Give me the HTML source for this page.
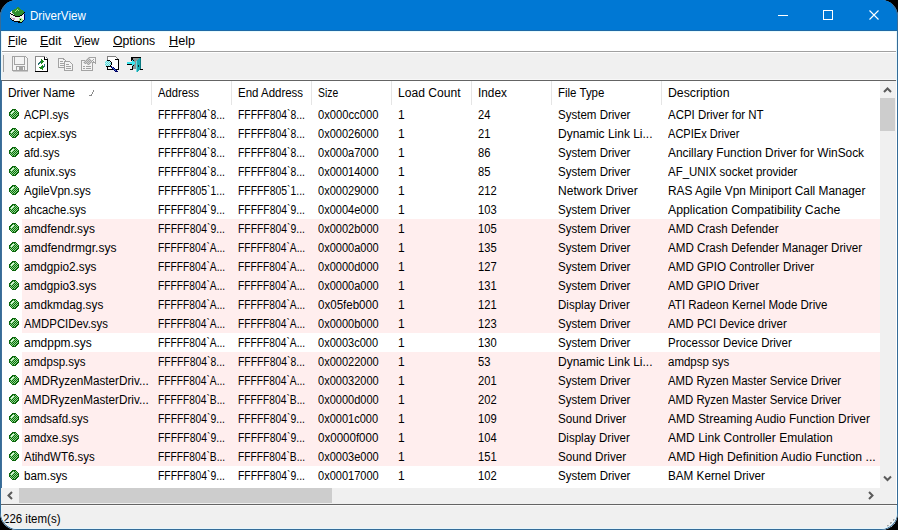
<!DOCTYPE html>
<html><head><meta charset="utf-8">
<style>
*{margin:0;padding:0;box-sizing:border-box}
html,body{width:898px;height:530px;overflow:hidden;background:#000}
body{position:relative;font-family:"Liberation Sans",sans-serif;font-size:12px;color:#000}
#win{position:absolute;left:0;top:0;width:898px;height:530px;background:#f0f0f0;border-radius:17px;overflow:hidden}
#frame{position:absolute;left:0;top:0;width:898px;height:530px;border:1px solid #356c98;border-top-color:#0078d4;border-radius:17px}
.abs{position:absolute}
#title{position:absolute;left:0;top:0;width:898px;height:31px;background:#0078d4}
#ttext{position:absolute;left:30px;top:1px;line-height:30px;color:#fff;font-size:12px}
#menu{position:absolute;left:1px;top:31px;width:896px;height:20px;background:#fff}
.mi{position:absolute;top:0;line-height:21px}
.mi u{text-decoration:underline}
#mline{position:absolute;left:1px;top:51px;width:896px;height:1px;background:#a0a0a0}
#mline2{position:absolute;left:1px;top:52px;width:896px;height:1px;background:#fff}
#tb{position:absolute;left:1px;top:53px;width:896px;height:26px;background:#f0f0f0}
#tbl{position:absolute;left:1px;top:79px;width:896px;height:1px;background:#f8f8f8}
#grip{position:absolute;left:3px;top:55px;width:1px;height:17px;background:#a0a0a0}
#lv{position:absolute;left:1px;top:80px;width:896px;height:425px;background:#fff;border-top:1px solid #646464;border-left:1px solid #41709a}
.ht{position:absolute;top:82px;line-height:23px;color:#000}
.hs{position:absolute;top:81px;width:1px;height:24px;background:#e5e5e5}
.pink{position:absolute;left:22px;width:858px;height:19px;background:#ffeeee}
.ico{position:absolute;left:9px;width:10px;height:10px}
.ico svg{display:block}
.c{position:absolute;line-height:19px;white-space:nowrap}
span{display:inline-block;transform-origin:0 0}
#vsb{position:absolute;left:880px;top:81px;width:16px;height:407px;background:#f0f0f0}
#vthumb{position:absolute;left:880px;top:98px;width:15px;height:33px;background:#cdcdcd}
#hsb{position:absolute;left:1px;top:488px;width:895px;height:16px;background:#f0f0f0}
#hthumb{position:absolute;left:19px;top:488px;width:313px;height:15px;background:#cdcdcd}
#sline{position:absolute;left:1px;top:504px;width:896px;height:1px;background:#646464}
#status{position:absolute;left:1px;top:505px;width:896px;height:25px;background:#f0f0f0;border-top:1px solid #fafafa}
#stext{position:absolute;left:3px;top:508px;line-height:23px}
</style></head><body>
<svg width="0" height="0" style="position:absolute">
<defs>
<g id="gball" shape-rendering="crispEdges"><rect x="3" y="0" width="4" height="1" fill="#0b650b"/><rect x="2" y="1" width="2" height="1" fill="#0b650b"/><rect x="4" y="1" width="1" height="1" fill="#8fe08f"/><rect x="5" y="1" width="1" height="1" fill="#0b650b"/><rect x="6" y="1" width="1" height="1" fill="#8fe08f"/><rect x="7" y="1" width="1" height="1" fill="#0b650b"/><rect x="1" y="2" width="2" height="1" fill="#0b650b"/><rect x="3" y="2" width="2" height="1" fill="#d6f6d6"/><rect x="5" y="2" width="1" height="1" fill="#8fe08f"/><rect x="6" y="2" width="1" height="1" fill="#0b650b"/><rect x="7" y="2" width="1" height="1" fill="#8fe08f"/><rect x="8" y="2" width="1" height="1" fill="#0b650b"/><rect x="0" y="3" width="2" height="1" fill="#0b650b"/><rect x="2" y="3" width="2" height="1" fill="#d6f6d6"/><rect x="4" y="3" width="1" height="1" fill="#8fe08f"/><rect x="5" y="3" width="1" height="1" fill="#0b650b"/><rect x="6" y="3" width="1" height="1" fill="#8fe08f"/><rect x="7" y="3" width="1" height="1" fill="#0b650b"/><rect x="8" y="3" width="1" height="1" fill="#8fe08f"/><rect x="9" y="3" width="1" height="1" fill="#0b650b"/><rect x="0" y="4" width="1" height="1" fill="#0b650b"/><rect x="1" y="4" width="1" height="1" fill="#8fe08f"/><rect x="2" y="4" width="1" height="1" fill="#d6f6d6"/><rect x="3" y="4" width="1" height="1" fill="#8fe08f"/><rect x="4" y="4" width="1" height="1" fill="#0b650b"/><rect x="5" y="4" width="1" height="1" fill="#8fe08f"/><rect x="6" y="4" width="1" height="1" fill="#0b650b"/><rect x="7" y="4" width="1" height="1" fill="#8fe08f"/><rect x="8" y="4" width="2" height="1" fill="#0b650b"/><rect x="0" y="5" width="2" height="1" fill="#0b650b"/><rect x="2" y="5" width="1" height="1" fill="#8fe08f"/><rect x="3" y="5" width="1" height="1" fill="#0b650b"/><rect x="4" y="5" width="1" height="1" fill="#8fe08f"/><rect x="5" y="5" width="1" height="1" fill="#0b650b"/><rect x="6" y="5" width="1" height="1" fill="#8fe08f"/><rect x="7" y="5" width="1" height="1" fill="#0b650b"/><rect x="8" y="5" width="1" height="1" fill="#8fe08f"/><rect x="9" y="5" width="1" height="1" fill="#0b650b"/><rect x="0" y="6" width="1" height="1" fill="#0b650b"/><rect x="1" y="6" width="1" height="1" fill="#8fe08f"/><rect x="2" y="6" width="1" height="1" fill="#0b650b"/><rect x="3" y="6" width="1" height="1" fill="#8fe08f"/><rect x="4" y="6" width="1" height="1" fill="#0b650b"/><rect x="5" y="6" width="1" height="1" fill="#8fe08f"/><rect x="6" y="6" width="1" height="1" fill="#0b650b"/><rect x="7" y="6" width="1" height="1" fill="#8fe08f"/><rect x="8" y="6" width="2" height="1" fill="#0b650b"/><rect x="1" y="7" width="1" height="1" fill="#0b650b"/><rect x="2" y="7" width="1" height="1" fill="#8fe08f"/><rect x="3" y="7" width="1" height="1" fill="#0b650b"/><rect x="4" y="7" width="1" height="1" fill="#8fe08f"/><rect x="5" y="7" width="1" height="1" fill="#0b650b"/><rect x="6" y="7" width="1" height="1" fill="#8fe08f"/><rect x="7" y="7" width="2" height="1" fill="#0b650b"/><rect x="2" y="8" width="1" height="1" fill="#0b650b"/><rect x="3" y="8" width="1" height="1" fill="#8fe08f"/><rect x="4" y="8" width="1" height="1" fill="#0b650b"/><rect x="5" y="8" width="1" height="1" fill="#8fe08f"/><rect x="6" y="8" width="2" height="1" fill="#0b650b"/><rect x="3" y="9" width="4" height="1" fill="#0b650b"/></g>
</defs>
</svg>
<div id="win">
<div id="title"></div>
<div id="menu"></div><div class="abs" style="left:0;top:30px;width:898px;height:1px;background:#1f69a6"></div><div class="abs" style="left:1px;top:31px;width:896px;height:1px;background:#e8fcff"></div>
<div id="mline"></div><div id="mline2"></div>
<div id="tb"></div><div id="tbl"></div>
<div id="lv"></div>
<div id="vsb"></div><div id="vthumb"></div>
<div id="hsb"></div><div id="hthumb"></div>
<div id="sline"></div>
<div id="status"></div>
</div>
<div id="ttext"><span style="transform:scaleX(0.9649)">DriverView</span></div>
<div class="mi" style="left:8px;top:31px"><span style="transform:scaleX(0.9889)"><u>F</u>ile</span></div>
<div class="mi" style="left:40px;top:31px"><span style="transform:scaleX(1.0368)"><u>E</u>dit</span></div>
<div class="mi" style="left:74px;top:31px"><span style="transform:scaleX(0.9808)"><u>V</u>iew</span></div>
<div class="mi" style="left:113px;top:31px"><span style="transform:scaleX(1.0195)"><u>O</u>ptions</span></div>
<div class="mi" style="left:169px;top:31px"><span style="transform:scaleX(1.0565)"><u>H</u>elp</span></div>
<div id="grip"></div>
<div class="abs" id="tcontent"></div>
<svg class="abs" style="left:9px;top:7px" width="16" height="16" viewBox="0 0 16 16" shape-rendering="crispEdges"><rect x="8" y="0" width="2" height="1" fill="#2f8f2f"/><rect x="7" y="1" width="4" height="1" fill="#2f8f2f"/><rect x="5" y="2" width="3" height="1" fill="#2f8f2f"/><rect x="8" y="2" width="1" height="1" fill="#a8f088"/><rect x="9" y="2" width="3" height="1" fill="#2f8f2f"/><rect x="3" y="3" width="4" height="1" fill="#2f8f2f"/><rect x="7" y="3" width="1" height="1" fill="#a8f088"/><rect x="8" y="3" width="1" height="1" fill="#2f8f2f"/><rect x="9" y="3" width="1" height="1" fill="#a8f088"/><rect x="10" y="3" width="4" height="1" fill="#2f8f2f"/><rect x="2" y="4" width="1" height="1" fill="#eef2f0"/><rect x="3" y="4" width="3" height="1" fill="#2f8f2f"/><rect x="6" y="4" width="1" height="1" fill="#a8f088"/><rect x="7" y="4" width="8" height="1" fill="#2f8f2f"/><rect x="1" y="5" width="2" height="1" fill="#eef2f0"/><rect x="3" y="5" width="12" height="1" fill="#2f8f2f"/><rect x="15" y="5" width="1" height="1" fill="#000000"/><rect x="1" y="6" width="1" height="1" fill="#000000"/><rect x="2" y="6" width="2" height="1" fill="#eef2f0"/><rect x="4" y="6" width="10" height="1" fill="#2f8f2f"/><rect x="14" y="6" width="1" height="1" fill="#000000"/><rect x="1" y="7" width="1" height="1" fill="#eef2f0"/><rect x="2" y="7" width="2" height="1" fill="#000000"/><rect x="4" y="7" width="1" height="1" fill="#eef2f0"/><rect x="5" y="7" width="8" height="1" fill="#2f8f2f"/><rect x="13" y="7" width="1" height="1" fill="#000000"/><rect x="14" y="7" width="1" height="1" fill="#eef2f0"/><rect x="15" y="7" width="1" height="1" fill="#000070"/><rect x="1" y="8" width="3" height="1" fill="#eef2f0"/><rect x="4" y="8" width="2" height="1" fill="#000000"/><rect x="6" y="8" width="5" height="1" fill="#2f8f2f"/><rect x="11" y="8" width="2" height="1" fill="#000000"/><rect x="13" y="8" width="2" height="1" fill="#eef2f0"/><rect x="15" y="8" width="1" height="1" fill="#000070"/><rect x="1" y="9" width="5" height="1" fill="#eef2f0"/><rect x="6" y="9" width="5" height="1" fill="#000000"/><rect x="11" y="9" width="4" height="1" fill="#eef2f0"/><rect x="15" y="9" width="1" height="1" fill="#000070"/><rect x="1" y="10" width="1" height="1" fill="#eef2f0"/><rect x="2" y="10" width="1" height="1" fill="#b8c0c0"/><rect x="3" y="10" width="12" height="1" fill="#eef2f0"/><rect x="15" y="10" width="1" height="1" fill="#000070"/><rect x="1" y="11" width="1" height="1" fill="#000000"/><rect x="2" y="11" width="1" height="1" fill="#eef2f0"/><rect x="3" y="11" width="3" height="1" fill="#d0a0c0"/><rect x="6" y="11" width="4" height="1" fill="#eef2f0"/><rect x="10" y="11" width="3" height="1" fill="#a8f088"/><rect x="13" y="11" width="2" height="1" fill="#eef2f0"/><rect x="15" y="11" width="1" height="1" fill="#000070"/><rect x="2" y="12" width="1" height="1" fill="#000000"/><rect x="3" y="12" width="1" height="1" fill="#eef2f0"/><rect x="4" y="12" width="2" height="1" fill="#d0a0c0"/><rect x="6" y="12" width="4" height="1" fill="#eef2f0"/><rect x="10" y="12" width="1" height="1" fill="#a8f088"/><rect x="11" y="12" width="1" height="1" fill="#000000"/><rect x="12" y="12" width="2" height="1" fill="#a8f088"/><rect x="14" y="12" width="1" height="1" fill="#eef2f0"/><rect x="15" y="12" width="1" height="1" fill="#000070"/><rect x="3" y="13" width="2" height="1" fill="#000000"/><rect x="5" y="13" width="5" height="1" fill="#eef2f0"/><rect x="10" y="13" width="4" height="1" fill="#a8f088"/><rect x="14" y="13" width="1" height="1" fill="#000070"/><rect x="5" y="14" width="6" height="1" fill="#000000"/><rect x="11" y="14" width="2" height="1" fill="#a8f088"/><rect x="13" y="14" width="1" height="1" fill="#000000"/><rect x="9" y="15" width="4" height="1" fill="#000000"/></svg>
<svg class="abs" style="left:12px;top:56px" width="16" height="16" viewBox="0 0 16 16" shape-rendering="crispEdges"><rect x="0" y="0" width="14" height="1" fill="#a3a3a3"/><rect x="0" y="1" width="1" height="1" fill="#a3a3a3"/><rect x="1" y="1" width="1" height="1" fill="#f4f4f4"/><rect x="2" y="1" width="1" height="1" fill="#a3a3a3"/><rect x="3" y="1" width="9" height="1" fill="#f4f4f4"/><rect x="12" y="1" width="1" height="1" fill="#a3a3a3"/><rect x="13" y="1" width="1" height="1" fill="#f4f4f4"/><rect x="14" y="1" width="1" height="1" fill="#a3a3a3"/><rect x="0" y="2" width="1" height="1" fill="#a3a3a3"/><rect x="1" y="2" width="1" height="1" fill="#f4f4f4"/><rect x="2" y="2" width="1" height="1" fill="#a3a3a3"/><rect x="3" y="2" width="9" height="1" fill="#f4f4f4"/><rect x="12" y="2" width="1" height="1" fill="#a3a3a3"/><rect x="13" y="2" width="2" height="1" fill="#f4f4f4"/><rect x="15" y="2" width="1" height="1" fill="#a3a3a3"/><rect x="0" y="3" width="1" height="1" fill="#a3a3a3"/><rect x="1" y="3" width="1" height="1" fill="#f4f4f4"/><rect x="2" y="3" width="1" height="1" fill="#a3a3a3"/><rect x="3" y="3" width="9" height="1" fill="#f4f4f4"/><rect x="12" y="3" width="1" height="1" fill="#a3a3a3"/><rect x="13" y="3" width="2" height="1" fill="#f4f4f4"/><rect x="15" y="3" width="1" height="1" fill="#a3a3a3"/><rect x="0" y="4" width="1" height="1" fill="#a3a3a3"/><rect x="1" y="4" width="1" height="1" fill="#f4f4f4"/><rect x="2" y="4" width="1" height="1" fill="#a3a3a3"/><rect x="3" y="4" width="9" height="1" fill="#f4f4f4"/><rect x="12" y="4" width="1" height="1" fill="#a3a3a3"/><rect x="13" y="4" width="2" height="1" fill="#f4f4f4"/><rect x="15" y="4" width="1" height="1" fill="#a3a3a3"/><rect x="0" y="5" width="1" height="1" fill="#a3a3a3"/><rect x="1" y="5" width="1" height="1" fill="#f4f4f4"/><rect x="2" y="5" width="1" height="1" fill="#a3a3a3"/><rect x="3" y="5" width="9" height="1" fill="#f4f4f4"/><rect x="12" y="5" width="1" height="1" fill="#a3a3a3"/><rect x="13" y="5" width="2" height="1" fill="#f4f4f4"/><rect x="15" y="5" width="1" height="1" fill="#a3a3a3"/><rect x="0" y="6" width="1" height="1" fill="#a3a3a3"/><rect x="1" y="6" width="1" height="1" fill="#f4f4f4"/><rect x="2" y="6" width="1" height="1" fill="#a3a3a3"/><rect x="3" y="6" width="9" height="1" fill="#f4f4f4"/><rect x="12" y="6" width="1" height="1" fill="#a3a3a3"/><rect x="13" y="6" width="2" height="1" fill="#f4f4f4"/><rect x="15" y="6" width="1" height="1" fill="#a3a3a3"/><rect x="0" y="7" width="1" height="1" fill="#a3a3a3"/><rect x="1" y="7" width="1" height="1" fill="#f4f4f4"/><rect x="2" y="7" width="1" height="1" fill="#a3a3a3"/><rect x="3" y="7" width="9" height="1" fill="#f4f4f4"/><rect x="12" y="7" width="1" height="1" fill="#a3a3a3"/><rect x="13" y="7" width="2" height="1" fill="#f4f4f4"/><rect x="15" y="7" width="1" height="1" fill="#a3a3a3"/><rect x="0" y="8" width="1" height="1" fill="#a3a3a3"/><rect x="1" y="8" width="1" height="1" fill="#f4f4f4"/><rect x="2" y="8" width="11" height="1" fill="#a3a3a3"/><rect x="13" y="8" width="2" height="1" fill="#f4f4f4"/><rect x="15" y="8" width="1" height="1" fill="#a3a3a3"/><rect x="0" y="9" width="1" height="1" fill="#a3a3a3"/><rect x="1" y="9" width="14" height="1" fill="#f4f4f4"/><rect x="15" y="9" width="1" height="1" fill="#a3a3a3"/><rect x="0" y="10" width="1" height="1" fill="#a3a3a3"/><rect x="1" y="10" width="3" height="1" fill="#f4f4f4"/><rect x="4" y="10" width="9" height="1" fill="#a3a3a3"/><rect x="13" y="10" width="2" height="1" fill="#f4f4f4"/><rect x="15" y="10" width="1" height="1" fill="#a3a3a3"/><rect x="0" y="11" width="1" height="1" fill="#a3a3a3"/><rect x="1" y="11" width="3" height="1" fill="#f4f4f4"/><rect x="4" y="11" width="1" height="1" fill="#a3a3a3"/><rect x="5" y="11" width="2" height="1" fill="#f4f4f4"/><rect x="7" y="11" width="4" height="1" fill="#a3a3a3"/><rect x="11" y="11" width="1" height="1" fill="#f4f4f4"/><rect x="12" y="11" width="1" height="1" fill="#a3a3a3"/><rect x="13" y="11" width="2" height="1" fill="#f4f4f4"/><rect x="15" y="11" width="1" height="1" fill="#a3a3a3"/><rect x="0" y="12" width="1" height="1" fill="#a3a3a3"/><rect x="1" y="12" width="3" height="1" fill="#f4f4f4"/><rect x="4" y="12" width="1" height="1" fill="#a3a3a3"/><rect x="5" y="12" width="2" height="1" fill="#f4f4f4"/><rect x="7" y="12" width="4" height="1" fill="#a3a3a3"/><rect x="11" y="12" width="1" height="1" fill="#f4f4f4"/><rect x="12" y="12" width="1" height="1" fill="#a3a3a3"/><rect x="13" y="12" width="2" height="1" fill="#f4f4f4"/><rect x="15" y="12" width="1" height="1" fill="#a3a3a3"/><rect x="0" y="13" width="1" height="1" fill="#a3a3a3"/><rect x="1" y="13" width="3" height="1" fill="#f4f4f4"/><rect x="4" y="13" width="1" height="1" fill="#a3a3a3"/><rect x="5" y="13" width="2" height="1" fill="#f4f4f4"/><rect x="7" y="13" width="4" height="1" fill="#a3a3a3"/><rect x="11" y="13" width="1" height="1" fill="#f4f4f4"/><rect x="12" y="13" width="1" height="1" fill="#a3a3a3"/><rect x="13" y="13" width="2" height="1" fill="#f4f4f4"/><rect x="15" y="13" width="1" height="1" fill="#a3a3a3"/><rect x="0" y="14" width="16" height="1" fill="#a3a3a3"/><rect x="1" y="15" width="15" height="1" fill="#c8c8c8"/></svg>
<svg class="abs" style="left:35px;top:56px" width="13" height="16" viewBox="0 0 13 16" shape-rendering="crispEdges"><rect x="0" y="0" width="10" height="1" fill="#8a8a8a"/><rect x="0" y="1" width="1" height="1" fill="#8a8a8a"/><rect x="1" y="1" width="8" height="1" fill="#ffffff"/><rect x="9" y="1" width="1" height="1" fill="#000000"/><rect x="10" y="1" width="1" height="1" fill="#ffffff"/><rect x="11" y="1" width="1" height="1" fill="#8a8a8a"/><rect x="0" y="2" width="1" height="1" fill="#8a8a8a"/><rect x="1" y="2" width="8" height="1" fill="#ffffff"/><rect x="9" y="2" width="1" height="1" fill="#000000"/><rect x="10" y="2" width="2" height="1" fill="#ffffff"/><rect x="12" y="2" width="1" height="1" fill="#8a8a8a"/><rect x="0" y="3" width="1" height="1" fill="#8a8a8a"/><rect x="1" y="3" width="5" height="1" fill="#ffffff"/><rect x="6" y="3" width="1" height="1" fill="#1a8a1a"/><rect x="7" y="3" width="2" height="1" fill="#ffffff"/><rect x="9" y="3" width="4" height="1" fill="#000000"/><rect x="0" y="4" width="1" height="1" fill="#8a8a8a"/><rect x="1" y="4" width="5" height="1" fill="#ffffff"/><rect x="6" y="4" width="2" height="1" fill="#1a8a1a"/><rect x="8" y="4" width="4" height="1" fill="#ffffff"/><rect x="12" y="4" width="1" height="1" fill="#000000"/><rect x="0" y="5" width="1" height="1" fill="#8a8a8a"/><rect x="1" y="5" width="4" height="1" fill="#ffffff"/><rect x="5" y="5" width="1" height="1" fill="#2a6f6f"/><rect x="6" y="5" width="3" height="1" fill="#1a8a1a"/><rect x="9" y="5" width="3" height="1" fill="#ffffff"/><rect x="12" y="5" width="1" height="1" fill="#000000"/><rect x="0" y="6" width="1" height="1" fill="#8a8a8a"/><rect x="1" y="6" width="3" height="1" fill="#ffffff"/><rect x="4" y="6" width="2" height="1" fill="#2a6f6f"/><rect x="6" y="6" width="2" height="1" fill="#1a8a1a"/><rect x="8" y="6" width="4" height="1" fill="#ffffff"/><rect x="12" y="6" width="1" height="1" fill="#000000"/><rect x="0" y="7" width="1" height="1" fill="#8a8a8a"/><rect x="1" y="7" width="2" height="1" fill="#ffffff"/><rect x="3" y="7" width="2" height="1" fill="#2a6f6f"/><rect x="5" y="7" width="1" height="1" fill="#ffffff"/><rect x="6" y="7" width="1" height="1" fill="#1a8a1a"/><rect x="7" y="7" width="5" height="1" fill="#ffffff"/><rect x="12" y="7" width="1" height="1" fill="#000000"/><rect x="0" y="8" width="1" height="1" fill="#8a8a8a"/><rect x="1" y="8" width="2" height="1" fill="#ffffff"/><rect x="3" y="8" width="1" height="1" fill="#2a6f6f"/><rect x="4" y="8" width="5" height="1" fill="#ffffff"/><rect x="9" y="8" width="1" height="1" fill="#2a6f6f"/><rect x="10" y="8" width="2" height="1" fill="#ffffff"/><rect x="12" y="8" width="1" height="1" fill="#000000"/><rect x="0" y="9" width="1" height="1" fill="#8a8a8a"/><rect x="1" y="9" width="6" height="1" fill="#ffffff"/><rect x="7" y="9" width="1" height="1" fill="#1a8a1a"/><rect x="8" y="9" width="1" height="1" fill="#ffffff"/><rect x="9" y="9" width="1" height="1" fill="#2a6f6f"/><rect x="10" y="9" width="2" height="1" fill="#ffffff"/><rect x="12" y="9" width="1" height="1" fill="#000000"/><rect x="0" y="10" width="1" height="1" fill="#8a8a8a"/><rect x="1" y="10" width="5" height="1" fill="#ffffff"/><rect x="6" y="10" width="2" height="1" fill="#1a8a1a"/><rect x="8" y="10" width="2" height="1" fill="#2a6f6f"/><rect x="10" y="10" width="2" height="1" fill="#ffffff"/><rect x="12" y="10" width="1" height="1" fill="#000000"/><rect x="0" y="11" width="1" height="1" fill="#8a8a8a"/><rect x="1" y="11" width="3" height="1" fill="#ffffff"/><rect x="4" y="11" width="4" height="1" fill="#1a8a1a"/><rect x="8" y="11" width="1" height="1" fill="#2a6f6f"/><rect x="9" y="11" width="3" height="1" fill="#ffffff"/><rect x="12" y="11" width="1" height="1" fill="#000000"/><rect x="0" y="12" width="1" height="1" fill="#8a8a8a"/><rect x="1" y="12" width="4" height="1" fill="#ffffff"/><rect x="5" y="12" width="3" height="1" fill="#1a8a1a"/><rect x="8" y="12" width="4" height="1" fill="#ffffff"/><rect x="12" y="12" width="1" height="1" fill="#000000"/><rect x="0" y="13" width="1" height="1" fill="#8a8a8a"/><rect x="1" y="13" width="6" height="1" fill="#ffffff"/><rect x="7" y="13" width="1" height="1" fill="#1a8a1a"/><rect x="8" y="13" width="4" height="1" fill="#ffffff"/><rect x="12" y="13" width="1" height="1" fill="#000000"/><rect x="0" y="14" width="1" height="1" fill="#8a8a8a"/><rect x="1" y="14" width="11" height="1" fill="#ffffff"/><rect x="12" y="14" width="1" height="1" fill="#000000"/><rect x="0" y="15" width="13" height="1" fill="#000000"/></svg>
<svg class="abs" style="left:58px;top:58px" width="15" height="13" viewBox="0 0 15 13" shape-rendering="crispEdges"><rect x="0" y="0" width="6" height="1" fill="#a3a3a3"/><rect x="0" y="1" width="1" height="1" fill="#a3a3a3"/><rect x="1" y="1" width="4" height="1" fill="#f4f4f4"/><rect x="5" y="1" width="2" height="1" fill="#a3a3a3"/><rect x="0" y="2" width="1" height="1" fill="#a3a3a3"/><rect x="1" y="2" width="6" height="1" fill="#f4f4f4"/><rect x="7" y="2" width="1" height="1" fill="#a3a3a3"/><rect x="0" y="3" width="1" height="1" fill="#a3a3a3"/><rect x="1" y="3" width="1" height="1" fill="#f4f4f4"/><rect x="2" y="3" width="3" height="1" fill="#a3a3a3"/><rect x="5" y="3" width="1" height="1" fill="#f4f4f4"/><rect x="6" y="3" width="6" height="1" fill="#a3a3a3"/><rect x="0" y="4" width="1" height="1" fill="#a3a3a3"/><rect x="1" y="4" width="5" height="1" fill="#f4f4f4"/><rect x="6" y="4" width="1" height="1" fill="#a3a3a3"/><rect x="7" y="4" width="5" height="1" fill="#f4f4f4"/><rect x="12" y="4" width="1" height="1" fill="#a3a3a3"/><rect x="0" y="5" width="1" height="1" fill="#a3a3a3"/><rect x="1" y="5" width="1" height="1" fill="#f4f4f4"/><rect x="2" y="5" width="5" height="1" fill="#a3a3a3"/><rect x="7" y="5" width="6" height="1" fill="#f4f4f4"/><rect x="13" y="5" width="1" height="1" fill="#a3a3a3"/><rect x="0" y="6" width="1" height="1" fill="#a3a3a3"/><rect x="1" y="6" width="5" height="1" fill="#f4f4f4"/><rect x="6" y="6" width="1" height="1" fill="#a3a3a3"/><rect x="7" y="6" width="1" height="1" fill="#f4f4f4"/><rect x="8" y="6" width="3" height="1" fill="#a3a3a3"/><rect x="11" y="6" width="3" height="1" fill="#f4f4f4"/><rect x="14" y="6" width="1" height="1" fill="#a3a3a3"/><rect x="0" y="7" width="1" height="1" fill="#a3a3a3"/><rect x="1" y="7" width="1" height="1" fill="#f4f4f4"/><rect x="2" y="7" width="5" height="1" fill="#a3a3a3"/><rect x="7" y="7" width="7" height="1" fill="#f4f4f4"/><rect x="14" y="7" width="1" height="1" fill="#a3a3a3"/><rect x="0" y="8" width="1" height="1" fill="#a3a3a3"/><rect x="1" y="8" width="5" height="1" fill="#f4f4f4"/><rect x="6" y="8" width="1" height="1" fill="#a3a3a3"/><rect x="7" y="8" width="1" height="1" fill="#f4f4f4"/><rect x="8" y="8" width="5" height="1" fill="#a3a3a3"/><rect x="13" y="8" width="1" height="1" fill="#f4f4f4"/><rect x="14" y="8" width="1" height="1" fill="#a3a3a3"/><rect x="0" y="9" width="7" height="1" fill="#a3a3a3"/><rect x="7" y="9" width="7" height="1" fill="#f4f4f4"/><rect x="14" y="9" width="1" height="1" fill="#a3a3a3"/><rect x="6" y="10" width="1" height="1" fill="#a3a3a3"/><rect x="7" y="10" width="1" height="1" fill="#f4f4f4"/><rect x="8" y="10" width="5" height="1" fill="#a3a3a3"/><rect x="13" y="10" width="1" height="1" fill="#f4f4f4"/><rect x="14" y="10" width="1" height="1" fill="#a3a3a3"/><rect x="6" y="11" width="1" height="1" fill="#a3a3a3"/><rect x="7" y="11" width="7" height="1" fill="#f4f4f4"/><rect x="14" y="11" width="1" height="1" fill="#a3a3a3"/><rect x="6" y="12" width="9" height="1" fill="#a3a3a3"/></svg>
<svg class="abs" style="left:81px;top:57px" width="16" height="14" viewBox="0 0 16 14" shape-rendering="crispEdges"><rect x="7" y="0" width="1" height="1" fill="#cfcfcf"/><rect x="8" y="0" width="7" height="1" fill="#a3a3a3"/><rect x="6" y="1" width="1" height="1" fill="#cfcfcf"/><rect x="7" y="1" width="1" height="1" fill="#a3a3a3"/><rect x="8" y="1" width="1" height="1" fill="#cfcfcf"/><rect x="9" y="1" width="5" height="1" fill="#f4f4f4"/><rect x="14" y="1" width="1" height="1" fill="#a3a3a3"/><rect x="5" y="2" width="1" height="1" fill="#cfcfcf"/><rect x="6" y="2" width="1" height="1" fill="#a3a3a3"/><rect x="7" y="2" width="1" height="1" fill="#cfcfcf"/><rect x="8" y="2" width="1" height="1" fill="#a3a3a3"/><rect x="9" y="2" width="1" height="1" fill="#cfcfcf"/><rect x="10" y="2" width="2" height="1" fill="#f4f4f4"/><rect x="12" y="2" width="1" height="1" fill="#a3a3a3"/><rect x="13" y="2" width="1" height="1" fill="#f4f4f4"/><rect x="14" y="2" width="1" height="1" fill="#a3a3a3"/><rect x="0" y="3" width="4" height="1" fill="#a3a3a3"/><rect x="4" y="3" width="1" height="1" fill="#cfcfcf"/><rect x="5" y="3" width="1" height="1" fill="#a3a3a3"/><rect x="6" y="3" width="1" height="1" fill="#cfcfcf"/><rect x="7" y="3" width="1" height="1" fill="#a3a3a3"/><rect x="8" y="3" width="1" height="1" fill="#cfcfcf"/><rect x="9" y="3" width="1" height="1" fill="#a3a3a3"/><rect x="10" y="3" width="1" height="1" fill="#cfcfcf"/><rect x="11" y="3" width="1" height="1" fill="#a3a3a3"/><rect x="12" y="3" width="2" height="1" fill="#f4f4f4"/><rect x="14" y="3" width="1" height="1" fill="#a3a3a3"/><rect x="0" y="4" width="1" height="1" fill="#a3a3a3"/><rect x="1" y="4" width="2" height="1" fill="#f4f4f4"/><rect x="3" y="4" width="1" height="1" fill="#cfcfcf"/><rect x="4" y="4" width="1" height="1" fill="#a3a3a3"/><rect x="5" y="4" width="1" height="1" fill="#cfcfcf"/><rect x="6" y="4" width="1" height="1" fill="#a3a3a3"/><rect x="7" y="4" width="1" height="1" fill="#cfcfcf"/><rect x="8" y="4" width="1" height="1" fill="#a3a3a3"/><rect x="9" y="4" width="1" height="1" fill="#cfcfcf"/><rect x="10" y="4" width="1" height="1" fill="#a3a3a3"/><rect x="11" y="4" width="1" height="1" fill="#f4f4f4"/><rect x="12" y="4" width="1" height="1" fill="#a3a3a3"/><rect x="13" y="4" width="1" height="1" fill="#f4f4f4"/><rect x="14" y="4" width="1" height="1" fill="#a3a3a3"/><rect x="0" y="5" width="1" height="1" fill="#a3a3a3"/><rect x="1" y="5" width="1" height="1" fill="#f4f4f4"/><rect x="2" y="5" width="1" height="1" fill="#cfcfcf"/><rect x="3" y="5" width="1" height="1" fill="#a3a3a3"/><rect x="4" y="5" width="1" height="1" fill="#cfcfcf"/><rect x="5" y="5" width="1" height="1" fill="#a3a3a3"/><rect x="6" y="5" width="1" height="1" fill="#cfcfcf"/><rect x="7" y="5" width="1" height="1" fill="#a3a3a3"/><rect x="8" y="5" width="1" height="1" fill="#cfcfcf"/><rect x="9" y="5" width="1" height="1" fill="#a3a3a3"/><rect x="10" y="5" width="1" height="1" fill="#cfcfcf"/><rect x="11" y="5" width="4" height="1" fill="#a3a3a3"/><rect x="0" y="6" width="1" height="1" fill="#a3a3a3"/><rect x="1" y="6" width="2" height="1" fill="#f4f4f4"/><rect x="3" y="6" width="1" height="1" fill="#cfcfcf"/><rect x="4" y="6" width="1" height="1" fill="#a3a3a3"/><rect x="5" y="6" width="1" height="1" fill="#cfcfcf"/><rect x="6" y="6" width="1" height="1" fill="#a3a3a3"/><rect x="7" y="6" width="1" height="1" fill="#cfcfcf"/><rect x="8" y="6" width="1" height="1" fill="#a3a3a3"/><rect x="9" y="6" width="1" height="1" fill="#cfcfcf"/><rect x="10" y="6" width="1" height="1" fill="#f4f4f4"/><rect x="11" y="6" width="1" height="1" fill="#a3a3a3"/><rect x="14" y="6" width="1" height="1" fill="#a3a3a3"/><rect x="0" y="7" width="1" height="1" fill="#a3a3a3"/><rect x="1" y="7" width="5" height="1" fill="#f4f4f4"/><rect x="6" y="7" width="1" height="1" fill="#cfcfcf"/><rect x="7" y="7" width="1" height="1" fill="#a3a3a3"/><rect x="8" y="7" width="1" height="1" fill="#cfcfcf"/><rect x="9" y="7" width="2" height="1" fill="#f4f4f4"/><rect x="11" y="7" width="1" height="1" fill="#a3a3a3"/><rect x="0" y="8" width="1" height="1" fill="#a3a3a3"/><rect x="1" y="8" width="10" height="1" fill="#f4f4f4"/><rect x="11" y="8" width="1" height="1" fill="#a3a3a3"/><rect x="0" y="9" width="1" height="1" fill="#a3a3a3"/><rect x="1" y="9" width="1" height="1" fill="#f4f4f4"/><rect x="2" y="9" width="2" height="1" fill="#a3a3a3"/><rect x="4" y="9" width="1" height="1" fill="#f4f4f4"/><rect x="5" y="9" width="5" height="1" fill="#a3a3a3"/><rect x="10" y="9" width="1" height="1" fill="#f4f4f4"/><rect x="11" y="9" width="1" height="1" fill="#a3a3a3"/><rect x="0" y="10" width="1" height="1" fill="#a3a3a3"/><rect x="1" y="10" width="10" height="1" fill="#f4f4f4"/><rect x="11" y="10" width="1" height="1" fill="#a3a3a3"/><rect x="0" y="11" width="1" height="1" fill="#a3a3a3"/><rect x="1" y="11" width="1" height="1" fill="#f4f4f4"/><rect x="2" y="11" width="2" height="1" fill="#a3a3a3"/><rect x="4" y="11" width="1" height="1" fill="#f4f4f4"/><rect x="5" y="11" width="5" height="1" fill="#a3a3a3"/><rect x="10" y="11" width="1" height="1" fill="#f4f4f4"/><rect x="11" y="11" width="1" height="1" fill="#a3a3a3"/><rect x="0" y="12" width="1" height="1" fill="#a3a3a3"/><rect x="1" y="12" width="10" height="1" fill="#f4f4f4"/><rect x="11" y="12" width="1" height="1" fill="#a3a3a3"/><rect x="0" y="13" width="12" height="1" fill="#a3a3a3"/></svg>
<svg class="abs" style="left:104px;top:56px" width="16" height="16" viewBox="0 0 16 16" shape-rendering="crispEdges"><rect x="3" y="0" width="9" height="1" fill="#808080"/><rect x="3" y="1" width="1" height="1" fill="#808080"/><rect x="4" y="1" width="8" height="1" fill="#ffffff"/><rect x="12" y="1" width="1" height="1" fill="#808080"/><rect x="3" y="2" width="1" height="1" fill="#808080"/><rect x="4" y="2" width="9" height="1" fill="#ffffff"/><rect x="13" y="2" width="1" height="1" fill="#808080"/><rect x="3" y="3" width="1" height="1" fill="#808080"/><rect x="4" y="3" width="7" height="1" fill="#ffffff"/><rect x="11" y="3" width="4" height="1" fill="#000000"/><rect x="2" y="4" width="1" height="1" fill="#bff4f4"/><rect x="3" y="4" width="3" height="1" fill="#000000"/><rect x="6" y="4" width="8" height="1" fill="#ffffff"/><rect x="14" y="4" width="1" height="1" fill="#000000"/><rect x="1" y="5" width="1" height="1" fill="#bff4f4"/><rect x="2" y="5" width="1" height="1" fill="#60d8d8"/><rect x="3" y="5" width="1" height="1" fill="#bff4f4"/><rect x="4" y="5" width="1" height="1" fill="#60d8d8"/><rect x="5" y="5" width="1" height="1" fill="#bff4f4"/><rect x="6" y="5" width="1" height="1" fill="#000000"/><rect x="7" y="5" width="7" height="1" fill="#ffffff"/><rect x="14" y="5" width="1" height="1" fill="#000000"/><rect x="1" y="6" width="1" height="1" fill="#60d8d8"/><rect x="2" y="6" width="1" height="1" fill="#bff4f4"/><rect x="3" y="6" width="1" height="1" fill="#60d8d8"/><rect x="4" y="6" width="1" height="1" fill="#bff4f4"/><rect x="5" y="6" width="1" height="1" fill="#60d8d8"/><rect x="6" y="6" width="1" height="1" fill="#bff4f4"/><rect x="7" y="6" width="1" height="1" fill="#000000"/><rect x="8" y="6" width="6" height="1" fill="#ffffff"/><rect x="14" y="6" width="1" height="1" fill="#000000"/><rect x="1" y="7" width="1" height="1" fill="#bff4f4"/><rect x="2" y="7" width="1" height="1" fill="#60d8d8"/><rect x="3" y="7" width="1" height="1" fill="#bff4f4"/><rect x="4" y="7" width="1" height="1" fill="#60d8d8"/><rect x="5" y="7" width="1" height="1" fill="#bff4f4"/><rect x="6" y="7" width="1" height="1" fill="#60d8d8"/><rect x="7" y="7" width="1" height="1" fill="#000000"/><rect x="8" y="7" width="6" height="1" fill="#ffffff"/><rect x="14" y="7" width="1" height="1" fill="#000000"/><rect x="1" y="8" width="1" height="1" fill="#60d8d8"/><rect x="2" y="8" width="1" height="1" fill="#bff4f4"/><rect x="3" y="8" width="1" height="1" fill="#60d8d8"/><rect x="4" y="8" width="1" height="1" fill="#bff4f4"/><rect x="5" y="8" width="1" height="1" fill="#60d8d8"/><rect x="6" y="8" width="1" height="1" fill="#bff4f4"/><rect x="7" y="8" width="1" height="1" fill="#000000"/><rect x="8" y="8" width="6" height="1" fill="#ffffff"/><rect x="14" y="8" width="1" height="1" fill="#000000"/><rect x="1" y="9" width="1" height="1" fill="#bff4f4"/><rect x="2" y="9" width="1" height="1" fill="#60d8d8"/><rect x="3" y="9" width="1" height="1" fill="#bff4f4"/><rect x="4" y="9" width="1" height="1" fill="#60d8d8"/><rect x="5" y="9" width="1" height="1" fill="#bff4f4"/><rect x="6" y="9" width="1" height="1" fill="#000000"/><rect x="7" y="9" width="7" height="1" fill="#ffffff"/><rect x="14" y="9" width="1" height="1" fill="#000000"/><rect x="2" y="10" width="5" height="1" fill="#000000"/><rect x="7" y="10" width="1" height="1" fill="#000060"/><rect x="8" y="10" width="6" height="1" fill="#ffffff"/><rect x="14" y="10" width="1" height="1" fill="#000000"/><rect x="3" y="11" width="1" height="1" fill="#000000"/><rect x="4" y="11" width="3" height="1" fill="#ffffff"/><rect x="7" y="11" width="1" height="1" fill="#000060"/><rect x="8" y="11" width="1" height="1" fill="#4060d0"/><rect x="9" y="11" width="1" height="1" fill="#000060"/><rect x="10" y="11" width="4" height="1" fill="#ffffff"/><rect x="14" y="11" width="1" height="1" fill="#000000"/><rect x="3" y="12" width="1" height="1" fill="#000000"/><rect x="4" y="12" width="4" height="1" fill="#ffffff"/><rect x="8" y="12" width="1" height="1" fill="#000060"/><rect x="9" y="12" width="1" height="1" fill="#4060d0"/><rect x="10" y="12" width="1" height="1" fill="#000060"/><rect x="11" y="12" width="3" height="1" fill="#ffffff"/><rect x="14" y="12" width="1" height="1" fill="#000000"/><rect x="3" y="13" width="6" height="1" fill="#000000"/><rect x="9" y="13" width="1" height="1" fill="#000060"/><rect x="10" y="13" width="1" height="1" fill="#4060d0"/><rect x="11" y="13" width="1" height="1" fill="#000060"/><rect x="12" y="13" width="3" height="1" fill="#000000"/><rect x="10" y="14" width="1" height="1" fill="#000060"/><rect x="11" y="14" width="1" height="1" fill="#4060d0"/><rect x="12" y="14" width="1" height="1" fill="#000060"/><rect x="11" y="15" width="3" height="1" fill="#000060"/></svg>
<svg class="abs" style="left:124px;top:54px" width="20" height="20" viewBox="124 54 20 20" shape-rendering="crispEdges">
<rect x="133" y="58" width="7" height="11" fill="#8a9494"/>
<polygon points="136,61 140,57 141,57 141,69 137,72 136,72" fill="#1ba9b1"/>
<rect x="136" y="61" width="1" height="11" fill="#6fd8de"/>
<rect x="140" y="58" width="1" height="11" fill="#0b7a80"/>
<rect x="132" y="57" width="9" height="1" fill="#000"/>
<rect x="131" y="57" width="2" height="4" fill="#000"/>
<rect x="133" y="60" width="1" height="2" fill="#000"/>
<rect x="132" y="66" width="1" height="3" fill="#000"/>
<rect x="133" y="65" width="1" height="1" fill="#000"/>
<rect x="130" y="69" width="3" height="1" fill="#000"/>
<rect x="140" y="69" width="3" height="1" fill="#000"/>
<rect x="138" y="65" width="1" height="2" fill="#0a2a2a"/>
<rect x="127" y="62" width="6" height="2" fill="#3ce6ee"/>
<polygon points="132,60 135,63 132,66" fill="#3ce6ee"/>
<rect x="127" y="64" width="5" height="1" fill="#000"/>
</svg>
<svg class="abs" style="left:89px;top:90px" width="5" height="6" viewBox="0 0 5 6" shape-rendering="crispEdges"><rect x="4" y="0" width="1" height="1" fill="#8c8c8c"/><rect x="4" y="1" width="1" height="1" fill="#8c8c8c"/><rect x="3" y="2" width="1" height="1" fill="#8c8c8c"/><rect x="3" y="3" width="1" height="1" fill="#8c8c8c"/><rect x="2" y="4" width="1" height="1" fill="#8c8c8c"/><rect x="0" y="5" width="3" height="1" fill="#8c8c8c"/></svg>
<div class="abs" style="left:778px;top:15px;width:10px;height:1px;background:#fff"></div>
<div class="abs" style="left:823px;top:10px;width:10px;height:10px;border:1px solid #fff"></div>
<svg class="abs" style="left:869px;top:10px" width="10" height="10" viewBox="0 0 10 10"><path d="M0.5 0.5L9.5 9.5M9.5 0.5L0.5 9.5" stroke="#fff" stroke-width="1.1"/></svg>

<svg class="abs" style="left:883px;top:86px" width="9" height="7"><path d="M1 6L4.5 2.5L8 6" stroke="#5a5a5a" stroke-width="2" fill="none"/></svg>
<svg class="abs" style="left:883px;top:475px" width="9" height="7"><path d="M1 1.5L4.5 5L8 1.5" stroke="#5a5a5a" stroke-width="2" fill="none"/></svg>
<svg class="abs" style="left:6px;top:491px" width="8" height="9"><path d="M6 1L2.5 4.5L6 8" stroke="#5a5a5a" stroke-width="2" fill="none"/></svg>
<svg class="abs" style="left:867px;top:491px" width="8" height="9"><path d="M2 1L5.5 4.5L2 8" stroke="#5a5a5a" stroke-width="2" fill="none"/></svg>
<div class="ht" style="left:8px"><span style="transform:scaleX(0.9924)">Driver Name</span></div>
<div class="ht" style="left:158px"><span style="transform:scaleX(0.9341)">Address</span></div>
<div class="ht" style="left:238px"><span style="transform:scaleX(0.9567)">End Address</span></div>
<div class="ht" style="left:318px"><span style="transform:scaleX(0.8636)">Size</span></div>
<div class="ht" style="left:398px"><span style="transform:scaleX(1.0082)">Load Count</span></div>
<div class="ht" style="left:478px"><span style="transform:scaleX(0.9821)">Index</span></div>
<div class="ht" style="left:558px"><span style="transform:scaleX(0.9574)">File Type</span></div>
<div class="ht" style="left:668px"><span style="transform:scaleX(1.0241)">Description</span></div>
<div class="hs" style="left:151px"></div>
<div class="hs" style="left:231px"></div>
<div class="hs" style="left:311px"></div>
<div class="hs" style="left:391px"></div>
<div class="hs" style="left:471px"></div>
<div class="hs" style="left:551px"></div>
<div class="hs" style="left:661px"></div>
<svg class="ico" style="top:109px" width="10" height="10" viewBox="0 0 10 10"><use href="#gball"/></svg>
<div class="c" style="left:24px;top:106px"><span style="transform:scaleX(0.9061)">ACPI.sys</span></div>
<div class="c" style="left:158px;top:106px"><span style="transform:scaleX(0.8653)">FFFFF804`8...</span></div>
<div class="c" style="left:238px;top:106px"><span style="transform:scaleX(0.8653)">FFFFF804`8...</span></div>
<div class="c" style="left:318px;top:106px"><span style="transform:scaleX(0.9328)">0x000cc000</span></div>
<div class="c" style="left:398px;top:106px"><span style="transform:scaleX(1.0000)">1</span></div>
<div class="c" style="left:478px;top:106px"><span style="transform:scaleX(0.9300)">24</span></div>
<div class="c" style="left:558px;top:106px"><span style="transform:scaleX(0.9608)">System Driver</span></div>
<div class="c" style="left:668px;top:106px"><span style="transform:scaleX(0.9560)">ACPI Driver for NT</span></div>
<svg class="ico" style="top:128px" width="10" height="10" viewBox="0 0 10 10"><use href="#gball"/></svg>
<div class="c" style="left:24px;top:125px"><span style="transform:scaleX(0.9411)">acpiex.sys</span></div>
<div class="c" style="left:158px;top:125px"><span style="transform:scaleX(0.8653)">FFFFF804`8...</span></div>
<div class="c" style="left:238px;top:125px"><span style="transform:scaleX(0.8653)">FFFFF804`8...</span></div>
<div class="c" style="left:318px;top:125px"><span style="transform:scaleX(0.9185)">0x00026000</span></div>
<div class="c" style="left:398px;top:125px"><span style="transform:scaleX(1.0000)">1</span></div>
<div class="c" style="left:478px;top:125px"><span style="transform:scaleX(0.9300)">21</span></div>
<div class="c" style="left:558px;top:125px"><span style="transform:scaleX(0.9978)">Dynamic Link Li...</span></div>
<div class="c" style="left:668px;top:125px"><span style="transform:scaleX(0.9221)">ACPIEx Driver</span></div>
<svg class="ico" style="top:147px" width="10" height="10" viewBox="0 0 10 10"><use href="#gball"/></svg>
<div class="c" style="left:24px;top:144px"><span style="transform:scaleX(0.9342)">afd.sys</span></div>
<div class="c" style="left:158px;top:144px"><span style="transform:scaleX(0.8653)">FFFFF804`8...</span></div>
<div class="c" style="left:238px;top:144px"><span style="transform:scaleX(0.8653)">FFFFF804`8...</span></div>
<div class="c" style="left:318px;top:144px"><span style="transform:scaleX(0.9185)">0x000a7000</span></div>
<div class="c" style="left:398px;top:144px"><span style="transform:scaleX(1.0000)">1</span></div>
<div class="c" style="left:478px;top:144px"><span style="transform:scaleX(0.9300)">86</span></div>
<div class="c" style="left:558px;top:144px"><span style="transform:scaleX(0.9608)">System Driver</span></div>
<div class="c" style="left:668px;top:144px"><span style="transform:scaleX(0.9899)">Ancillary Function Driver for WinSock</span></div>
<svg class="ico" style="top:166px" width="10" height="10" viewBox="0 0 10 10"><use href="#gball"/></svg>
<div class="c" style="left:24px;top:163px"><span style="transform:scaleX(0.9736)">afunix.sys</span></div>
<div class="c" style="left:158px;top:163px"><span style="transform:scaleX(0.8653)">FFFFF804`8...</span></div>
<div class="c" style="left:238px;top:163px"><span style="transform:scaleX(0.8653)">FFFFF804`8...</span></div>
<div class="c" style="left:318px;top:163px"><span style="transform:scaleX(0.9185)">0x00014000</span></div>
<div class="c" style="left:398px;top:163px"><span style="transform:scaleX(1.0000)">1</span></div>
<div class="c" style="left:478px;top:163px"><span style="transform:scaleX(0.9300)">85</span></div>
<div class="c" style="left:558px;top:163px"><span style="transform:scaleX(0.9608)">System Driver</span></div>
<div class="c" style="left:668px;top:163px"><span style="transform:scaleX(0.9556)">AF_UNIX socket provider</span></div>
<svg class="ico" style="top:185px" width="10" height="10" viewBox="0 0 10 10"><use href="#gball"/></svg>
<div class="c" style="left:24px;top:182px"><span style="transform:scaleX(0.9638)">AgileVpn.sys</span></div>
<div class="c" style="left:158px;top:182px"><span style="transform:scaleX(0.8653)">FFFFF805`1...</span></div>
<div class="c" style="left:238px;top:182px"><span style="transform:scaleX(0.8653)">FFFFF805`1...</span></div>
<div class="c" style="left:318px;top:182px"><span style="transform:scaleX(0.9185)">0x00029000</span></div>
<div class="c" style="left:398px;top:182px"><span style="transform:scaleX(1.0000)">1</span></div>
<div class="c" style="left:478px;top:182px"><span style="transform:scaleX(0.9300)">212</span></div>
<div class="c" style="left:558px;top:182px"><span style="transform:scaleX(1.0038)">Network Driver</span></div>
<div class="c" style="left:668px;top:182px"><span style="transform:scaleX(0.9899)">RAS Agile Vpn Miniport Call Manager</span></div>
<svg class="ico" style="top:204px" width="10" height="10" viewBox="0 0 10 10"><use href="#gball"/></svg>
<div class="c" style="left:24px;top:201px"><span style="transform:scaleX(0.9313)">ahcache.sys</span></div>
<div class="c" style="left:158px;top:201px"><span style="transform:scaleX(0.8653)">FFFFF804`9...</span></div>
<div class="c" style="left:238px;top:201px"><span style="transform:scaleX(0.8653)">FFFFF804`9...</span></div>
<div class="c" style="left:318px;top:201px"><span style="transform:scaleX(0.9185)">0x0004e000</span></div>
<div class="c" style="left:398px;top:201px"><span style="transform:scaleX(1.0000)">1</span></div>
<div class="c" style="left:478px;top:201px"><span style="transform:scaleX(0.9300)">103</span></div>
<div class="c" style="left:558px;top:201px"><span style="transform:scaleX(0.9608)">System Driver</span></div>
<div class="c" style="left:668px;top:201px"><span style="transform:scaleX(1.0208)">Application Compatibility Cache</span></div>
<div class="pink" style="top:219px"></div>
<svg class="ico" style="top:223px" width="10" height="10" viewBox="0 0 10 10"><use href="#gball"/></svg>
<div class="c" style="left:24px;top:220px"><span style="transform:scaleX(0.9944)">amdfendr.sys</span></div>
<div class="c" style="left:158px;top:220px"><span style="transform:scaleX(0.8653)">FFFFF804`9...</span></div>
<div class="c" style="left:238px;top:220px"><span style="transform:scaleX(0.8653)">FFFFF804`9...</span></div>
<div class="c" style="left:318px;top:220px"><span style="transform:scaleX(0.9185)">0x0002b000</span></div>
<div class="c" style="left:398px;top:220px"><span style="transform:scaleX(1.0000)">1</span></div>
<div class="c" style="left:478px;top:220px"><span style="transform:scaleX(0.9300)">105</span></div>
<div class="c" style="left:558px;top:220px"><span style="transform:scaleX(0.9608)">System Driver</span></div>
<div class="c" style="left:668px;top:220px"><span style="transform:scaleX(0.9635)">AMD Crash Defender</span></div>
<div class="pink" style="top:238px"></div>
<svg class="ico" style="top:242px" width="10" height="10" viewBox="0 0 10 10"><use href="#gball"/></svg>
<div class="c" style="left:24px;top:239px"><span style="transform:scaleX(1.0054)">amdfendrmgr.sys</span></div>
<div class="c" style="left:158px;top:239px"><span style="transform:scaleX(0.8539)">FFFFF804`A...</span></div>
<div class="c" style="left:238px;top:239px"><span style="transform:scaleX(0.8539)">FFFFF804`A...</span></div>
<div class="c" style="left:318px;top:239px"><span style="transform:scaleX(0.9185)">0x0000a000</span></div>
<div class="c" style="left:398px;top:239px"><span style="transform:scaleX(1.0000)">1</span></div>
<div class="c" style="left:478px;top:239px"><span style="transform:scaleX(0.9300)">135</span></div>
<div class="c" style="left:558px;top:239px"><span style="transform:scaleX(0.9608)">System Driver</span></div>
<div class="c" style="left:668px;top:239px"><span style="transform:scaleX(0.9667)">AMD Crash Defender Manager Driver</span></div>
<div class="pink" style="top:257px"></div>
<svg class="ico" style="top:261px" width="10" height="10" viewBox="0 0 10 10"><use href="#gball"/></svg>
<div class="c" style="left:24px;top:258px"><span style="transform:scaleX(0.9784)">amdgpio2.sys</span></div>
<div class="c" style="left:158px;top:258px"><span style="transform:scaleX(0.8539)">FFFFF804`A...</span></div>
<div class="c" style="left:238px;top:258px"><span style="transform:scaleX(0.8539)">FFFFF804`A...</span></div>
<div class="c" style="left:318px;top:258px"><span style="transform:scaleX(0.9185)">0x0000d000</span></div>
<div class="c" style="left:398px;top:258px"><span style="transform:scaleX(1.0000)">1</span></div>
<div class="c" style="left:478px;top:258px"><span style="transform:scaleX(0.9300)">127</span></div>
<div class="c" style="left:558px;top:258px"><span style="transform:scaleX(0.9608)">System Driver</span></div>
<div class="c" style="left:668px;top:258px"><span style="transform:scaleX(0.9689)">AMD GPIO Controller Driver</span></div>
<div class="pink" style="top:276px"></div>
<svg class="ico" style="top:280px" width="10" height="10" viewBox="0 0 10 10"><use href="#gball"/></svg>
<div class="c" style="left:24px;top:277px"><span style="transform:scaleX(0.9784)">amdgpio3.sys</span></div>
<div class="c" style="left:158px;top:277px"><span style="transform:scaleX(0.8539)">FFFFF804`A...</span></div>
<div class="c" style="left:238px;top:277px"><span style="transform:scaleX(0.8539)">FFFFF804`A...</span></div>
<div class="c" style="left:318px;top:277px"><span style="transform:scaleX(0.9185)">0x0000a000</span></div>
<div class="c" style="left:398px;top:277px"><span style="transform:scaleX(1.0000)">1</span></div>
<div class="c" style="left:478px;top:277px"><span style="transform:scaleX(0.9300)">131</span></div>
<div class="c" style="left:558px;top:277px"><span style="transform:scaleX(0.9608)">System Driver</span></div>
<div class="c" style="left:668px;top:277px"><span style="transform:scaleX(0.9547)">AMD GPIO Driver</span></div>
<div class="pink" style="top:295px"></div>
<svg class="ico" style="top:299px" width="10" height="10" viewBox="0 0 10 10"><use href="#gball"/></svg>
<div class="c" style="left:24px;top:296px"><span style="transform:scaleX(0.9827)">amdkmdag.sys</span></div>
<div class="c" style="left:158px;top:296px"><span style="transform:scaleX(0.8539)">FFFFF804`A...</span></div>
<div class="c" style="left:238px;top:296px"><span style="transform:scaleX(0.8539)">FFFFF804`A...</span></div>
<div class="c" style="left:318px;top:296px"><span style="transform:scaleX(0.9629)">0x05feb000</span></div>
<div class="c" style="left:398px;top:296px"><span style="transform:scaleX(1.0000)">1</span></div>
<div class="c" style="left:478px;top:296px"><span style="transform:scaleX(0.9300)">121</span></div>
<div class="c" style="left:558px;top:296px"><span style="transform:scaleX(0.9608)">Display Driver</span></div>
<div class="c" style="left:668px;top:296px"><span style="transform:scaleX(0.9612)">ATI Radeon Kernel Mode Drive</span></div>
<div class="pink" style="top:314px"></div>
<svg class="ico" style="top:318px" width="10" height="10" viewBox="0 0 10 10"><use href="#gball"/></svg>
<div class="c" style="left:24px;top:315px"><span style="transform:scaleX(0.9489)">AMDPCIDev.sys</span></div>
<div class="c" style="left:158px;top:315px"><span style="transform:scaleX(0.8539)">FFFFF804`A...</span></div>
<div class="c" style="left:238px;top:315px"><span style="transform:scaleX(0.8539)">FFFFF804`A...</span></div>
<div class="c" style="left:318px;top:315px"><span style="transform:scaleX(0.9185)">0x0000b000</span></div>
<div class="c" style="left:398px;top:315px"><span style="transform:scaleX(1.0000)">1</span></div>
<div class="c" style="left:478px;top:315px"><span style="transform:scaleX(0.9300)">123</span></div>
<div class="c" style="left:558px;top:315px"><span style="transform:scaleX(0.9608)">System Driver</span></div>
<div class="c" style="left:668px;top:315px"><span style="transform:scaleX(0.9626)">AMD PCI Device driver</span></div>
<svg class="ico" style="top:337px" width="10" height="10" viewBox="0 0 10 10"><use href="#gball"/></svg>
<div class="c" style="left:24px;top:334px"><span style="transform:scaleX(0.9956)">amdppm.sys</span></div>
<div class="c" style="left:158px;top:334px"><span style="transform:scaleX(0.8539)">FFFFF804`A...</span></div>
<div class="c" style="left:238px;top:334px"><span style="transform:scaleX(0.8539)">FFFFF804`A...</span></div>
<div class="c" style="left:318px;top:334px"><span style="transform:scaleX(0.9185)">0x0003c000</span></div>
<div class="c" style="left:398px;top:334px"><span style="transform:scaleX(1.0000)">1</span></div>
<div class="c" style="left:478px;top:334px"><span style="transform:scaleX(0.9300)">130</span></div>
<div class="c" style="left:558px;top:334px"><span style="transform:scaleX(0.9608)">System Driver</span></div>
<div class="c" style="left:668px;top:334px"><span style="transform:scaleX(0.9570)">Processor Device Driver</span></div>
<div class="pink" style="top:352px"></div>
<svg class="ico" style="top:356px" width="10" height="10" viewBox="0 0 10 10"><use href="#gball"/></svg>
<div class="c" style="left:24px;top:353px"><span style="transform:scaleX(0.9625)">amdpsp.sys</span></div>
<div class="c" style="left:158px;top:353px"><span style="transform:scaleX(0.8653)">FFFFF804`8...</span></div>
<div class="c" style="left:238px;top:353px"><span style="transform:scaleX(0.8653)">FFFFF804`8...</span></div>
<div class="c" style="left:318px;top:353px"><span style="transform:scaleX(0.9185)">0x00022000</span></div>
<div class="c" style="left:398px;top:353px"><span style="transform:scaleX(1.0000)">1</span></div>
<div class="c" style="left:478px;top:353px"><span style="transform:scaleX(0.9300)">53</span></div>
<div class="c" style="left:558px;top:353px"><span style="transform:scaleX(0.9978)">Dynamic Link Li...</span></div>
<div class="c" style="left:668px;top:353px"><span style="transform:scaleX(0.9578)">amdpsp sys</span></div>
<div class="pink" style="top:371px"></div>
<svg class="ico" style="top:375px" width="10" height="10" viewBox="0 0 10 10"><use href="#gball"/></svg>
<div class="c" style="left:24px;top:372px"><span style="transform:scaleX(0.9754)">AMDRyzenMasterDriv...</span></div>
<div class="c" style="left:158px;top:372px"><span style="transform:scaleX(0.8539)">FFFFF804`A...</span></div>
<div class="c" style="left:238px;top:372px"><span style="transform:scaleX(0.8539)">FFFFF804`A...</span></div>
<div class="c" style="left:318px;top:372px"><span style="transform:scaleX(0.9185)">0x00032000</span></div>
<div class="c" style="left:398px;top:372px"><span style="transform:scaleX(1.0000)">1</span></div>
<div class="c" style="left:478px;top:372px"><span style="transform:scaleX(0.9300)">201</span></div>
<div class="c" style="left:558px;top:372px"><span style="transform:scaleX(0.9608)">System Driver</span></div>
<div class="c" style="left:668px;top:372px"><span style="transform:scaleX(0.9470)">AMD Ryzen Master Service Driver</span></div>
<div class="pink" style="top:390px"></div>
<svg class="ico" style="top:394px" width="10" height="10" viewBox="0 0 10 10"><use href="#gball"/></svg>
<div class="c" style="left:24px;top:391px"><span style="transform:scaleX(0.9754)">AMDRyzenMasterDriv...</span></div>
<div class="c" style="left:158px;top:391px"><span style="transform:scaleX(0.8539)">FFFFF804`B...</span></div>
<div class="c" style="left:238px;top:391px"><span style="transform:scaleX(0.8539)">FFFFF804`B...</span></div>
<div class="c" style="left:318px;top:391px"><span style="transform:scaleX(0.9185)">0x0000d000</span></div>
<div class="c" style="left:398px;top:391px"><span style="transform:scaleX(1.0000)">1</span></div>
<div class="c" style="left:478px;top:391px"><span style="transform:scaleX(0.9300)">202</span></div>
<div class="c" style="left:558px;top:391px"><span style="transform:scaleX(0.9608)">System Driver</span></div>
<div class="c" style="left:668px;top:391px"><span style="transform:scaleX(0.9470)">AMD Ryzen Master Service Driver</span></div>
<div class="pink" style="top:409px"></div>
<svg class="ico" style="top:413px" width="10" height="10" viewBox="0 0 10 10"><use href="#gball"/></svg>
<div class="c" style="left:24px;top:410px"><span style="transform:scaleX(0.9582)">amdsafd.sys</span></div>
<div class="c" style="left:158px;top:410px"><span style="transform:scaleX(0.8653)">FFFFF804`9...</span></div>
<div class="c" style="left:238px;top:410px"><span style="transform:scaleX(0.8653)">FFFFF804`9...</span></div>
<div class="c" style="left:318px;top:410px"><span style="transform:scaleX(0.9185)">0x0001c000</span></div>
<div class="c" style="left:398px;top:410px"><span style="transform:scaleX(1.0000)">1</span></div>
<div class="c" style="left:478px;top:410px"><span style="transform:scaleX(0.9300)">109</span></div>
<div class="c" style="left:558px;top:410px"><span style="transform:scaleX(0.9725)">Sound Driver</span></div>
<div class="c" style="left:668px;top:410px"><span style="transform:scaleX(0.9961)">AMD Streaming Audio Function Driver</span></div>
<div class="pink" style="top:428px"></div>
<svg class="ico" style="top:432px" width="10" height="10" viewBox="0 0 10 10"><use href="#gball"/></svg>
<div class="c" style="left:24px;top:429px"><span style="transform:scaleX(0.9561)">amdxe.sys</span></div>
<div class="c" style="left:158px;top:429px"><span style="transform:scaleX(0.8653)">FFFFF804`9...</span></div>
<div class="c" style="left:238px;top:429px"><span style="transform:scaleX(0.8653)">FFFFF804`9...</span></div>
<div class="c" style="left:318px;top:429px"><span style="transform:scaleX(0.9629)">0x0000f000</span></div>
<div class="c" style="left:398px;top:429px"><span style="transform:scaleX(1.0000)">1</span></div>
<div class="c" style="left:478px;top:429px"><span style="transform:scaleX(0.9300)">104</span></div>
<div class="c" style="left:558px;top:429px"><span style="transform:scaleX(0.9608)">Display Driver</span></div>
<div class="c" style="left:668px;top:429px"><span style="transform:scaleX(1.0043)">AMD Link Controller Emulation</span></div>
<div class="pink" style="top:447px"></div>
<svg class="ico" style="top:451px" width="10" height="10" viewBox="0 0 10 10"><use href="#gball"/></svg>
<div class="c" style="left:24px;top:448px"><span style="transform:scaleX(0.9541)">AtihdWT6.sys</span></div>
<div class="c" style="left:158px;top:448px"><span style="transform:scaleX(0.8539)">FFFFF804`B...</span></div>
<div class="c" style="left:238px;top:448px"><span style="transform:scaleX(0.8539)">FFFFF804`B...</span></div>
<div class="c" style="left:318px;top:448px"><span style="transform:scaleX(0.9185)">0x0003e000</span></div>
<div class="c" style="left:398px;top:448px"><span style="transform:scaleX(1.0000)">1</span></div>
<div class="c" style="left:478px;top:448px"><span style="transform:scaleX(0.9300)">151</span></div>
<div class="c" style="left:558px;top:448px"><span style="transform:scaleX(0.9725)">Sound Driver</span></div>
<div class="c" style="left:668px;top:448px"><span style="transform:scaleX(1.0177)">AMD High Definition Audio Function ...</span></div>
<svg class="ico" style="top:470px" width="10" height="10" viewBox="0 0 10 10"><use href="#gball"/></svg>
<div class="c" style="left:24px;top:467px"><span style="transform:scaleX(0.9705)">bam.sys</span></div>
<div class="c" style="left:158px;top:467px"><span style="transform:scaleX(0.8653)">FFFFF804`9...</span></div>
<div class="c" style="left:238px;top:467px"><span style="transform:scaleX(0.8653)">FFFFF804`9...</span></div>
<div class="c" style="left:318px;top:467px"><span style="transform:scaleX(0.9185)">0x00017000</span></div>
<div class="c" style="left:398px;top:467px"><span style="transform:scaleX(1.0000)">1</span></div>
<div class="c" style="left:478px;top:467px"><span style="transform:scaleX(0.9300)">102</span></div>
<div class="c" style="left:558px;top:467px"><span style="transform:scaleX(0.9608)">System Driver</span></div>
<div class="c" style="left:668px;top:467px"><span style="transform:scaleX(0.9755)">BAM Kernel Driver</span></div>
<div id="stext"><span style="transform:scaleX(0.9576)">226 item(s)</span></div>
<svg class="abs" style="left:885px;top:517px" width="12" height="12" shape-rendering="crispEdges"><g fill="#a8a8a8"><rect x="8" y="2" width="2" height="2"/><rect x="5" y="5" width="2" height="2"/><rect x="8" y="5" width="2" height="2" fill="#c4c4c4"/><rect x="2" y="8" width="2" height="2"/><rect x="5" y="8" width="2" height="2" fill="#c4c4c4"/></g></svg>
<div id="frame"></div>
<div class="abs" style="left:896px;top:31px;width:1px;height:50px;background:#e6f6fc"></div>
<div class="abs" style="left:1px;top:31px;width:1px;height:49px;background:#e6f6fc"></div>
<div class="abs" style="left:1px;top:31px;width:896px;height:498px;border:1px solid #e6f6fc;border-top:none;border-radius:0 0 16px 16px;clip-path:inset(474px 0 0 0)"></div>

</body></html>
